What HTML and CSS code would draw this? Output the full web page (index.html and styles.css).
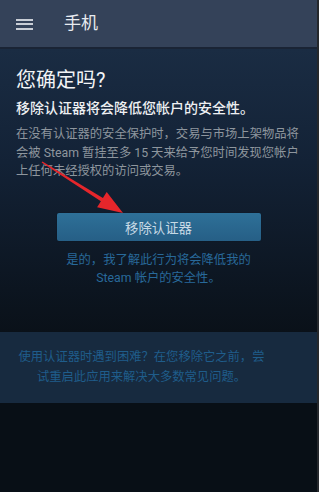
FILE: index.html
```html
<!DOCTYPE html>
<html lang="zh-CN">
<head>
<meta charset="utf-8">
<title>手机</title>
<link rel="stylesheet" href="styles.css">
</head>
<body>
<div class="app">
  <header class="topbar">
    <span class="menu" aria-hidden="true"><i></i><i></i><i></i></span>
    <span class="topbar-title">手机</span>
  </header>
  <main class="content">
    <h1 class="title">您确定吗?</h1>
    <p class="subtitle">移除认证器将会降低您帐户的安全性。</p>
    <p class="desc">在没有认证器的安全保护时，交易与市场上架物品将会被 Steam 暂挂至多 15 天来给予您时间发现您帐户上任何未经授权的访问或交易。</p>
    <div class="actions">
      <button class="btn">移除认证器</button>
      <p class="confirm">是的，我了解此行为将会降低我的<br>Steam 帐户的安全性。</p>
    </div>
  </main>
  <section class="help">
    <p>使用认证器时遇到困难？在您移除它之前，尝试重启此应用来解决大多数常见问题。</p>
  </section>
  <div class="rest"></div>
  <svg class="arrow" width="319" height="492" viewBox="0 0 319 492" aria-hidden="true">
    <polygon fill="#e5262b" points="41.6,162.6 42.4,161.4 102.9,198.0 106.7,192.1 123,213 97.1,207.3 100.9,201.3"/>
  </svg>
</div>
</body>
</html>
```

FILE: styles.css
```css
html, body {
  margin: 0;
  padding: 0;
}
body {
  background: #25282c;
  font-family: Roboto, "Noto Sans CJK SC", "Noto Sans", sans-serif;
  width: 319px;
  height: 492px;
  overflow: hidden;
}
.app {
  position: relative;
  width: 317px;
  height: 492px;
  display: flex;
  flex-direction: column;
  background: #080f16;
}
.topbar {
  height: 47px;
  flex: 0 0 47px;
  background: #344259;
  border-bottom: 2px solid #1a2435;
  display: flex;
  align-items: center;
  padding-left: 16px;
}
.menu {
  display: flex;
  flex-direction: column;
  gap: 2.5px;
  width: 17px;
  margin-top: 1px;
}
.menu i {
  display: block;
  height: 2px;
  background: #c9ced6;
}
.topbar-title {
  margin-left: 31px;
  font-size: 17px;
  color: #e8ebf0;
  line-height: 1;
}
.content {
  background: linear-gradient(180deg, #1a2c43 0%, #132236 40%, #0c1520 85%, #0a1119 100%);
  padding: 17px 14px 45px 16px;
}
.title {
  margin: 0;
  font-size: 20px;
  line-height: 28px;
  font-weight: 400;
  color: #f2f4f6;
}
.subtitle {
  margin: 3.5px 0 0;
  font-size: 14px;
  line-height: 20px;
  font-weight: 500;
  color: #eef0f3;
}
.desc {
  margin: 7.75px 0 0;
  font-size: 12.3px;
  line-height: 18.5px;
  color: #8e969e;
}
.actions {
  display: flex;
  flex-direction: column;
  align-items: center;
  margin-right: -14px;
  margin-left: -16px;
}
.btn {
  margin-top: 32.5px;
  width: 204px;
  height: 28px;
  border: 0;
  border-radius: 2px;
  background: linear-gradient(180deg, #2e7098 0%, #265f86 100%);
  box-shadow: 0 0 1px rgba(0,0,0,0.6);
  color: #c7d9e5;
  font-family: inherit;
  font-size: 13.4px;
  padding: 0;
  cursor: pointer;
}
.confirm {
  margin: 9.7px 0 0;
  text-align: center;
  font-size: 12.3px;
  line-height: 18px;
  color: #28699a;
}
.help {
  background: #172a3f;
  padding: 16.5px 52px 16px 18px;
}
.help p {
  margin: 0;
  text-align: center;
  font-size: 12.3px;
  line-height: 19.5px;
  color: #1f5d8b;
}
.rest {
  flex: 1;
  background: #080f16;
}
.arrow {
  position: absolute;
  left: 0;
  top: 0;
  pointer-events: none;
}
```
